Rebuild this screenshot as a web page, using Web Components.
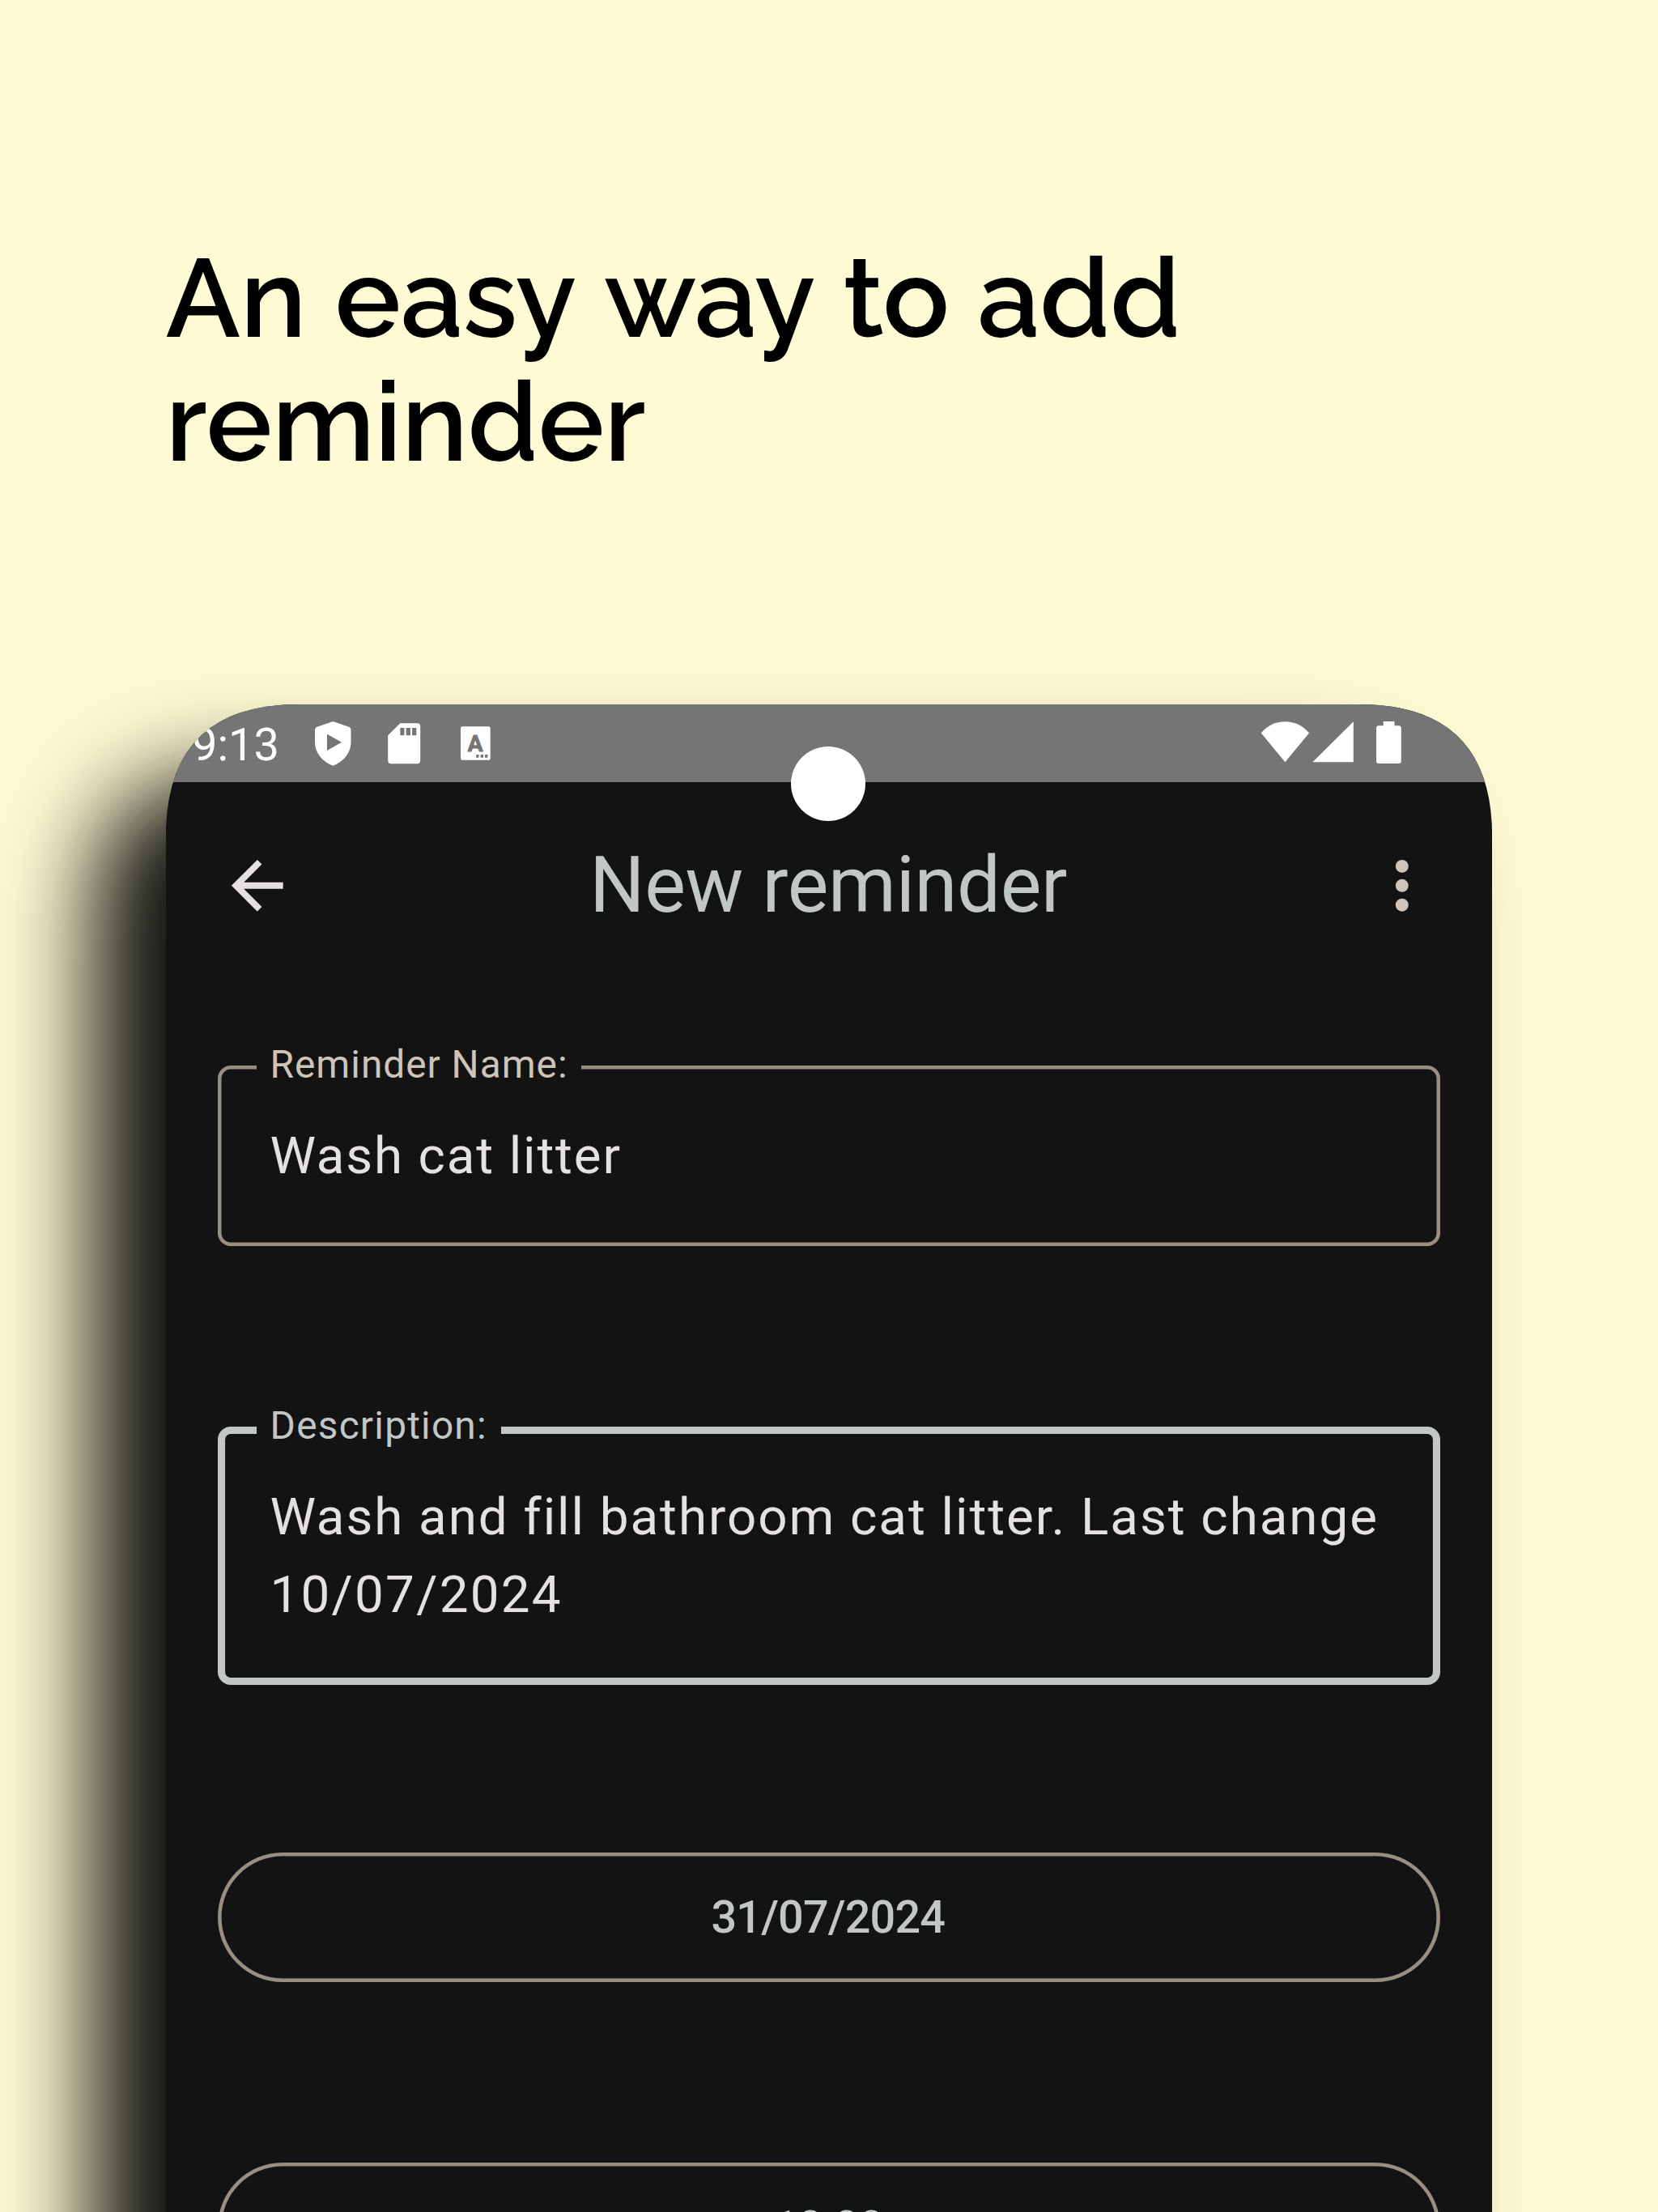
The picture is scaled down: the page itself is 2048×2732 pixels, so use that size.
<!DOCTYPE html>
<html lang="en">
<head>
<meta charset="utf-8">
<title>New reminder</title>
<style>
html,body{margin:0;padding:0;background:#fefad4}
body{width:2048px;height:2732px;overflow:hidden}
</style>
</head>
<body>
<promo-page>
  <promo-headline slot="headline"></promo-headline>
  <phone-frame>
    <status-bar time="9:13"></status-bar>
    <app-bar>New reminder</app-bar>
    <outlined-field label="Reminder Name:" style="--label-track:.99px;--track:1.87px">Wash cat litter</outlined-field>
    <outlined-field label="Description:" focused>Wash and fill bathroom cat litter. Last change <span style="letter-spacing:2.26px">10/07/2024</span></outlined-field>
    <outlined-button>31/07/2024</outlined-button>
    <outlined-button>10:00</outlined-button>
  </phone-frame>
</promo-page>
<script>
const define = (name, html, init) => customElements.define(name, class extends HTMLElement {
  constructor() {
    super();
    this.attachShadow({ mode: 'open' }).innerHTML = html;
  }
  connectedCallback() { if (init) init(this, this.shadowRoot); }
});

define('promo-page', `
<style>
:host{display:flex;flex-direction:column;width:2048px;height:2732px;overflow:hidden;background:#fefad4;font-family:Roboto,sans-serif;--dp:3.9822px}
.head{height:870px;flex:none;box-sizing:border-box;padding:292px 0 0 204.8px}
</style>
<div class="head"><slot name="headline"></slot></div>
<slot></slot>`);

define('promo-headline', `
<style>
:host{display:block;font:600 136.53px/153.3px Raleway,Lato,sans-serif;color:#000}
div{white-space:pre}
span{display:inline-block}
.last{letter-spacing:.2px}
</style>
<div><span>An </span><span style="margin-left:1.5px">easy </span><span style="margin-left:4.5px">way </span><span style="margin-left:4px">to </span><span style="margin-left:1px">add</span></div><div class="last">reminder</div>`);

define('phone-frame', `
<style>
:host{display:block;flex:none;width:1638.4px;margin-left:204.8px;filter:drop-shadow(-90px 90px 59px rgba(0,0,0,.93))}
.screen{display:flex;flex-direction:column;height:2300px;background:#141313;
clip-path:path("M0 163.84Q0 0 163.84 0H1474.56Q1638.4 0 1638.4 163.84V2300H0Z")}
::slotted(outlined-field),::slotted(outlined-button){margin:0 calc(var(--dp)*16) calc(var(--dp)*56)}
::slotted(outlined-field[focused]){margin-bottom:207.5px}
</style>
<div class="screen"><slot></slot></div>`);

define('status-bar', `
<style>
:host{display:flex;flex:none;position:relative;height:95.6px;background:#757575;color:#fff}
.time{font-size:56px;line-height:95.6px;padding-left:32.2px;width:147px;margin-top:3px;height:92px}
svg{display:block;flex:none;height:95.6px}
.gap{flex:1}
.camera{position:absolute;left:772.4px;top:52px;width:92px;height:92px;border-radius:50%;background:#fff}
</style>
<div class="time"></div>
<svg width="230" viewBox="384 870 230 95.6" fill="#fff">
<path d="M411.3 891L431.5 898Q433.5 899 433.5 901.5V917C433.5 930 424 941 411.3 945.7C398.5 941 389 930 389 917V901.5Q389 899 391 898ZM404 906.7V927L422 916.8Z" fill-rule="evenodd"/>
<path fill-rule="evenodd" d="M494.3 893.3H515.2Q519.2 893.3 519.2 897.3V939.3Q519.2 943.3 515.2 943.3H483.2Q479.2 943.3 479.2 939.3V908.3ZM494.3 899V908.3H499.4V899ZM501.7 899V908.3H506.9V899ZM509.1 899V908.3H514.3V899Z"/>
<path fill-rule="evenodd" d="M571 897.3H603.7Q605.7 897.3 605.7 899.3V936.7Q605.7 938.7 603.7 938.7H571Q569 938.7 569 936.7V899.3Q569 897.3 571 897.3ZM588.2 932V935.7H591.4V932ZM593.6 932V935.7H597V932ZM599 932V935.7H602.4V932Z"/>
<text x="587.2" y="928" text-anchor="middle" font-family="Roboto" font-weight="700" font-size="28.5" fill="#757575" stroke="#757575" stroke-width=".8">A</text>
</svg>
<div class="gap"></div>
<svg width="290" viewBox="1553.2 870 290 95.6" fill="#fff">
<path d="M1557.9 905.3Q1570 891.2 1587.6 891.2T1617.3 905.3L1587.6 941.3Z"/>
<path d="M1672 891.3V941.3H1621.6Z"/>
<path d="M1709 891H1722.7V896.3H1728Q1731 896.3 1731 899.3V940Q1731 943 1728 943H1703.2Q1700.2 943 1700.2 940V899.3Q1700.2 896.3 1703.2 896.3H1709Z"/>
</svg>
<div class="camera"></div>`, (el, root) => { root.querySelector('.time').textContent = el.getAttribute('time'); });

define('app-bar', `
<style>
:host{display:flex;flex:none;align-items:center;justify-content:space-between;height:calc(var(--dp)*64);margin-bottom:calc(var(--dp)*24);padding:0 64px 0 65.5px;color:#c1c7c6}
h1{font-weight:400;font-size:95.6px;line-height:127px;margin:0 3px 0 0;letter-spacing:-.3px}
svg{display:block;width:95.6px;height:95.6px;margin-top:2px}
</style>
<svg viewBox="0 0 24 24" fill="#e6e1e1"><path d="M20 11H7.83l5.59-5.59L12 4l-8 8 8 8 1.41-1.41L7.83 13H20v-2z"/></svg>
<h1><slot></slot></h1>
<svg viewBox="0 0 24 24" fill="#cec5b8"><circle cx="12" cy="6" r="2"/><circle cx="12" cy="12" r="2"/><circle cx="12" cy="18" r="2"/></svg>`);

define('outlined-field', `
<style>
:host{display:block;flex:none;position:relative;box-sizing:border-box;padding:calc(var(--dp)*16 + .3px) 60px calc(var(--dp)*16 - .3px) 64.9px;border-radius:16px;box-shadow:inset 0 0 0 4.55px #998f80;
font-size:63.7px;line-height:calc(var(--dp)*24);letter-spacing:var(--track,1.97px);color:#e6e1e1}
:host([focused]){box-shadow:inset 0 0 0 9.1px #c1c7c6}
label{position:absolute;left:48.5px;top:-32.2px;padding:0 17px 0 16.6px;background:#141313;font-size:47.8px;line-height:63.7px;letter-spacing:var(--label-track,1.22px);color:#cec5b8;white-space:nowrap}
:host([focused]) label{color:#c1c7c6}
</style>
<label></label><slot></slot>`, (el, root) => { root.querySelector('label').textContent = el.getAttribute('label'); });

define('outlined-button', `
<style>
:host{display:flex;flex:none;box-sizing:border-box;align-items:center;justify-content:center;height:160.2px;padding-right:2.4px;border-radius:80.1px;box-shadow:inset 0 0 0 4.55px #998f80;
font-weight:500;font-size:55.7px;letter-spacing:-.81px;color:#c1c7c6}
</style>
<slot></slot>`);
</script>
</body>
</html>
